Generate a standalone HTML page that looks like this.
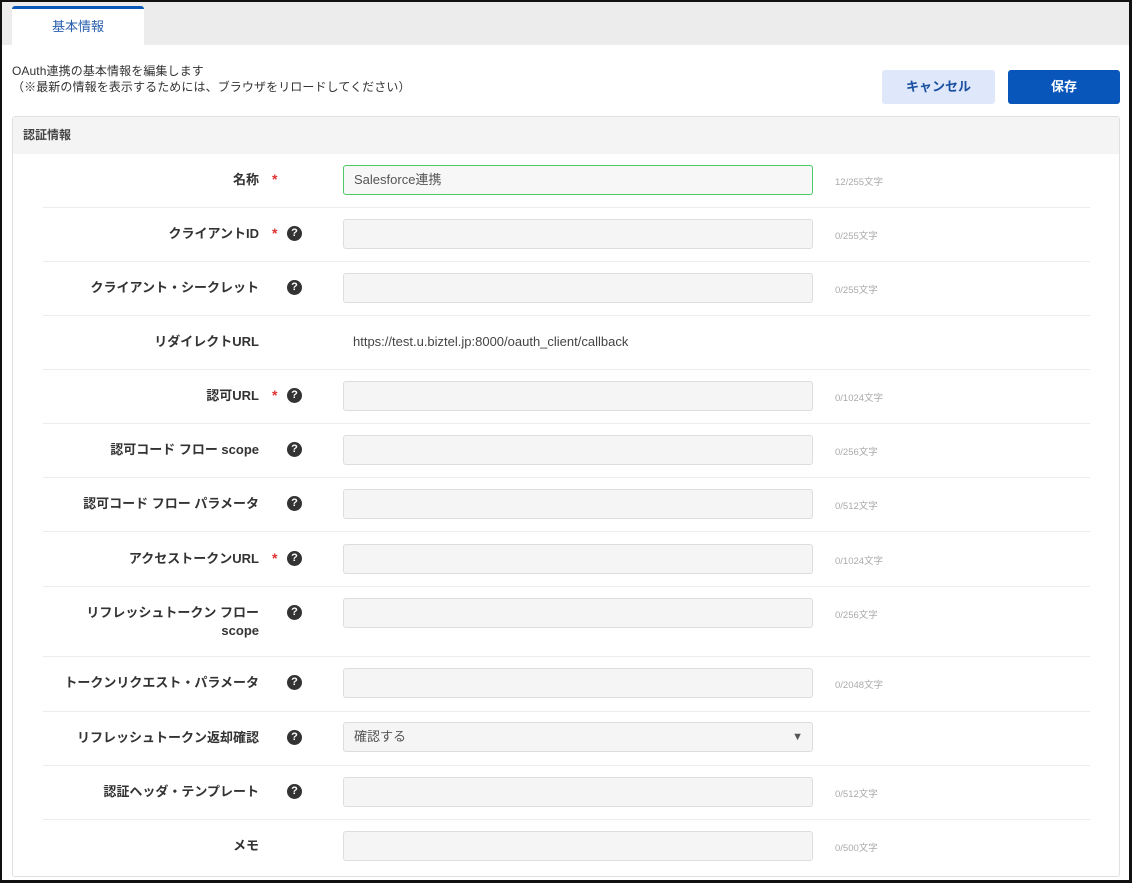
<!DOCTYPE html>
<html><head><meta charset="utf-8"><style>
*{box-sizing:border-box;margin:0;padding:0}
body{width:1132px;height:883px;background:#fff;font-family:"Liberation Sans","Noto Sans CJK JP",sans-serif;color:#333;position:relative;overflow:hidden}
.frame{position:absolute;left:0;top:0;width:1132px;height:883px;border:2px solid #111;border-right-width:3px;border-bottom-width:3px;pointer-events:none;z-index:10}
.topband{position:absolute;left:2px;top:2px;width:1127px;height:43px;background:#ececec}
.tab{position:absolute;left:12px;top:6px;width:132px;height:39px;background:#fff;border-top:3px solid #0a57b8;border-radius:3px 3px 0 0;color:#2a5fae;font-size:13px;text-align:center;line-height:36px}
.desc{position:absolute;left:12px;top:63px;font-size:12px;line-height:16px;color:#333;letter-spacing:0.1px}
.btn{position:absolute;top:70px;height:34px;border-radius:3px;font-size:13px;font-weight:bold;text-align:center;line-height:34px}
.cancel{left:882px;width:113px;background:#dfe8fb;color:#1a4fa0}
.save{left:1008px;width:112px;background:#0856b9;color:#fff}
.panel{position:absolute;left:12px;top:116px;width:1108px;height:761px;border:1px solid #e0e0e0;border-radius:3px}
.phead{position:absolute;left:0;top:0;width:100%;height:37px;background:#f4f4f4;font-size:12px;font-weight:bold;line-height:37px;padding-left:10px;color:#444}
.sep{position:absolute;left:43px;width:1047px;height:1px;background:#ececec}
.lbl{position:absolute;right:873px;font-size:13px;font-weight:bold;color:#333;text-align:right;line-height:18px;margin-top:1px}
.req{position:absolute;left:272px;color:#d33;font-size:14px;font-weight:bold}
.q{position:absolute;left:287px;width:15px;height:15px;border-radius:50%;background:#333;color:#fff;font-size:11px;font-weight:bold;text-align:center;line-height:15px}
.inp{position:absolute;left:343px;width:470px;height:30px;background:#f5f5f5;border:1px solid #ddd;border-radius:3px;font-size:13px;color:#555;padding-left:10px;line-height:28px}
.cnt{position:absolute;left:835px;font-size:9.5px;color:#aaa}
</style></head><body>
<div class="frame"></div>
<div class="topband"></div>
<div class="tab">基本情報</div>
<div class="desc">OAuth連携の基本情報を編集します<br>（※最新の情報を表示するためには、ブラウザをリロードしてください）</div>
<div class="btn cancel">キャンセル</div>
<div class="btn save">保存</div>
<div class="panel"><div class="phead">認証情報</div></div>

<div class="sep" style="top:207px"></div><div class="sep" style="top:261px"></div><div class="sep" style="top:315px"></div><div class="sep" style="top:369px"></div><div class="sep" style="top:423px"></div><div class="sep" style="top:477px"></div><div class="sep" style="top:531px"></div><div class="sep" style="top:586px"></div><div class="sep" style="top:656px"></div><div class="sep" style="top:711px"></div><div class="sep" style="top:765px"></div><div class="sep" style="top:819px"></div>

<div class="lbl" style="top:170px">名称</div><div class="req" style="top:171px">*</div>
<div class="inp" style="top:165px;border-color:#4cc96a;background:#f7f7f7">Salesforce連携</div><div class="cnt" style="top:174px">12/255文字</div>

<div class="lbl" style="top:224px">クライアントID</div><div class="req" style="top:225px">*</div><div class="q" style="top:226px">?</div>
<div class="inp" style="top:219px"></div><div class="cnt" style="top:228px">0/255文字</div>

<div class="lbl" style="top:278px">クライアント・シークレット</div><div class="q" style="top:280px">?</div>
<div class="inp" style="top:273px"></div><div class="cnt" style="top:282px">0/255文字</div>

<div class="lbl" style="top:332px">リダイレクトURL</div>
<div style="position:absolute;left:353px;top:334px;font-size:13px;color:#444">https://test.u.biztel.jp:8000/oauth_client/callback</div>

<div class="lbl" style="top:386px">認可URL</div><div class="req" style="top:387px">*</div><div class="q" style="top:388px">?</div>
<div class="inp" style="top:381px"></div><div class="cnt" style="top:390px">0/1024文字</div>

<div class="lbl" style="top:440px">認可コード フロー scope</div><div class="q" style="top:442px">?</div>
<div class="inp" style="top:435px"></div><div class="cnt" style="top:444px">0/256文字</div>

<div class="lbl" style="top:494px">認可コード フロー パラメータ</div><div class="q" style="top:496px">?</div>
<div class="inp" style="top:489px"></div><div class="cnt" style="top:498px">0/512文字</div>

<div class="lbl" style="top:549px">アクセストークンURL</div><div class="req" style="top:550px">*</div><div class="q" style="top:551px">?</div>
<div class="inp" style="top:544px"></div><div class="cnt" style="top:553px">0/1024文字</div>

<div class="lbl" style="top:603px">リフレッシュトークン フロー<br>scope</div><div class="q" style="top:605px">?</div>
<div class="inp" style="top:598px"></div><div class="cnt" style="top:607px">0/256文字</div>

<div class="lbl" style="top:673px">トークンリクエスト・パラメータ</div><div class="q" style="top:675px">?</div>
<div class="inp" style="top:668px"></div><div class="cnt" style="top:677px">0/2048文字</div>

<div class="lbl" style="top:728px">リフレッシュトークン返却確認</div><div class="q" style="top:730px">?</div>
<div class="inp" style="top:722px">確認する<span style="position:absolute;right:9px;top:0;font-size:11px;color:#555">▼</span></div>

<div class="lbl" style="top:782px">認証ヘッダ・テンプレート</div><div class="q" style="top:784px">?</div>
<div class="inp" style="top:777px"></div><div class="cnt" style="top:786px">0/512文字</div>

<div class="lbl" style="top:836px">メモ</div>
<div class="inp" style="top:831px"></div><div class="cnt" style="top:840px">0/500文字</div>
</body></html>
